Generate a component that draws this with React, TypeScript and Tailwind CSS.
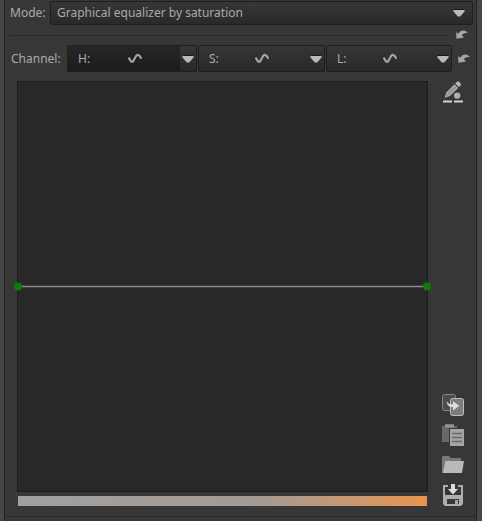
import { useState } from "react";

function Triangle() {
  return (
    <svg width="12" height="8" viewBox="0 0 12 8" aria-hidden="true">
      <path d="M0.5 1H11.5V2.5L7.2 7.5H4.8L0.5 2.5Z" fill="#b9b9b9" />
      <path d="M1 0.5H11" stroke="#161616" strokeWidth="1" />
    </svg>
  );
}

function CurveIcon() {
  return (
    <svg width="14" height="12" viewBox="0 0 14 12" aria-hidden="true">
      <path
        d="M0.5 4.6L3.2 8.6L4.8 8.8L8.4 2.4L10 1.8L11.6 2.8L13.5 5.6"
        fill="none"
        stroke="#a6a6a6"
        strokeWidth="2.1"
        strokeLinejoin="round"
      />
    </svg>
  );
}

function ResetButton({ label }: { label: string }) {
  return (
    <button type="button" aria-label={label} className="h-3 w-3 shrink-0">
      <svg width="12" height="12" viewBox="0 0 12 12" aria-hidden="true">
        <path
          d="M0.2 3L2 4.8L4.2 2.4C6.8 1 10 1.4 12 4.2C9.6 3.6 7.4 4.2 5.8 6L8 8.6L0.4 9.8Z"
          fill="#a6a6a6"
        />
      </svg>
    </button>
  );
}

type ChannelProps = {
  name: string;
  active: boolean;
  onSelect: () => void;
};

function Channel({ name, active, onSelect }: ChannelProps) {
  return (
    <div className="flex h-[27px] overflow-hidden rounded-xs border border-[#1e1e1e] bg-linear-to-b from-[#363636] to-[#292929]">
      <button
        type="button"
        aria-pressed={active}
        onClick={onSelect}
        className={
          active
            ? "flex flex-1 items-center gap-1 bg-linear-to-b from-[#262626] to-[#1c1c1c] pl-2.5"
            : "flex flex-1 items-center pl-2.5"
        }
      >
        <span className="w-[46px] text-left">{name}:</span>
        <CurveIcon />
      </button>
      <button
        type="button"
        aria-label={`${name} curve type`}
        className="flex w-4 items-center justify-center"
      >
        <Triangle />
      </button>
    </div>
  );
}

function EditIcon() {
  return (
    <svg width="22" height="22" viewBox="0 0 22 22" aria-hidden="true">
      <path d="M4.2 11.4L12.4 3.2L16.2 7L8 15L2.6 17Z" fill="#a8a8a8" />
      <path d="M13.2 2.4L15 0.7Q16 0 17 0.8L18.7 2.6Q19.4 3.5 18.6 4.5L17 6.2Z" fill="#b4b4b4" />
      <path d="M4.8 14.6L13.6 5.8" stroke="#777" strokeWidth="1" />
      <circle cx="15.2" cy="14.6" r="3.2" fill="#b0b0b0" />
      <path d="M1 20.5H10M12 20.5H21" stroke="#d2d2d2" strokeWidth="2" />
    </svg>
  );
}

function CopyIcon() {
  return (
    <svg width="22" height="22" viewBox="0 0 22 22" aria-hidden="true">
      <rect x="0.5" y="0.5" width="13" height="16" rx="2" fill="#4c4c4c" stroke="#858585" />
      <rect x="8.5" y="4.5" width="13" height="17" rx="2" fill="#7c7c7c" stroke="#bcbcbc" />
      <path
        d="M4.4 7C5 11.6 7.6 13.6 11 13V16.4L17.4 11.8L11 7.2V10.2C8 10.8 6.2 9.6 4.4 7Z"
        fill="#dcdcdc"
      />
    </svg>
  );
}

function PasteIcon() {
  return (
    <svg width="22" height="22" viewBox="0 0 22 22" aria-hidden="true">
      <path d="M0 2H3V0H12V2H15V18H0Z" fill="#686868" />
      <path d="M3 0.5H12V3.5H3Z" fill="#929292" />
      <rect x="7" y="4" width="15" height="18" fill="#393939" />
      <rect x="8" y="5" width="14" height="17" fill="#a4a4a4" />
      <path d="M10 9.5H20M10 13.5H20M10 17.5H20" stroke="#686868" strokeWidth="1.4" />
    </svg>
  );
}

function FolderIcon() {
  return (
    <svg width="22" height="22" viewBox="0 0 22 22" aria-hidden="true">
      <path d="M0 3Q0 2 1 2H7L9 4H18Q19 4 19 5V16L1 19Q0 19 0 18Z" fill="#787878" />
      <path d="M3.4 7H22L20 19H0.8Z" fill="#b9b9b9" />
    </svg>
  );
}

function SaveIcon() {
  return (
    <svg width="22" height="22" viewBox="0 0 22 22" aria-hidden="true">
      <path
        fillRule="evenodd"
        d="M1 1H6V3H3V11H19V3H16V1H21V20L19 22H3L1 20ZM5 15V20H17V15Z"
        fill="#adadad"
      />
      <path d="M9 0H13V5H16L11 10.5L6 5H9Z" fill="#dedede" />
      <rect x="13" y="16" width="3" height="4" fill="#a4a4a4" />
    </svg>
  );
}

const tools = [
  { label: "Copy curve", Icon: CopyIcon },
  { label: "Paste curve", Icon: PasteIcon },
  { label: "Open curve", Icon: FolderIcon },
  { label: "Save curve", Icon: SaveIcon },
];

export default function App() {
  const [channel, setChannel] = useState("H");

  return (
    <div className="flex min-h-screen bg-[#464646] pr-[5px] pl-1 font-['Noto_Sans',sans-serif] text-xs text-[#aaaaaa]">
      <main className="flex flex-1 flex-col border-x border-[#222222] bg-[#373737] pt-px">
        <div className="flex h-6 items-center pr-[3px] pl-[5px]">
          <label htmlFor="mode" className="w-10 shrink-0">
            Mode:
          </label>
          <div className="grid flex-1 items-center">
            <select
              id="mode"
              className="col-start-1 row-start-1 h-6 w-full appearance-none rounded-xs border border-[#1e1e1e] bg-linear-to-b from-[#373737] to-[#292929] pr-6 pl-1.5"
            >
              <option>Graphical equalizer by saturation</option>
            </select>
            <span className="pointer-events-none col-start-1 row-start-1 mr-2 justify-self-end">
              <Triangle />
            </span>
          </div>
        </div>

        <div className="flex h-5 items-center gap-2 pr-2 pl-1">
          <hr className="flex-1 border-t border-[#2c2c2c]" />
          <ResetButton label="Reset mode" />
        </div>

        <div className="flex items-center pr-1.5 pl-1.5">
          <span className="w-14 shrink-0">Channel:</span>
          <div className="grid flex-1 grid-cols-[130fr_127fr_126fr] gap-px">
            {["H", "S", "L"].map((name) => (
              <Channel
                key={name}
                name={name}
                active={channel === name}
                onSelect={() => setChannel(name)}
              />
            ))}
          </div>
          <div className="flex pl-1.5">
            <ResetButton label="Reset channel" />
          </div>
        </div>

        <div className="mt-[9px] flex gap-3.5 pr-3 pl-3">
          <div className="flex flex-1 flex-col gap-1">
            <div className="flex aspect-square w-full border border-[#1c1c1c] bg-[#282828]">
              <svg className="w-full flex-1 overflow-visible" role="img" aria-label="Hue curve">
                <line x1="0" y1="50%" x2="100%" y2="50%" stroke="#8c8c8c" strokeWidth="1.5" />
                <circle cx="0" cy="50%" r="4" fill="#0d7a0d" />
                <circle cx="100%" cy="50%" r="4" fill="#0d7a0d" />
              </svg>
            </div>
            <div className="mx-px h-2.5 bg-linear-to-r from-[#a0a0a0] via-[#a39a93] via-60% to-[#e8954a]" />
          </div>
          <div className="flex w-[22px] shrink-0 flex-col justify-between">
            <button type="button" aria-label="Edit points">
              <EditIcon />
            </button>
            <div className="flex flex-col gap-2">
              {tools.map(({ label, Icon }) => (
                <button key={label} type="button" aria-label={label}>
                  <Icon />
                </button>
              ))}
            </div>
          </div>
        </div>

        <hr className="mt-2.5 border-t border-[#2a2a2a]" />
      </main>
    </div>
  );
}
